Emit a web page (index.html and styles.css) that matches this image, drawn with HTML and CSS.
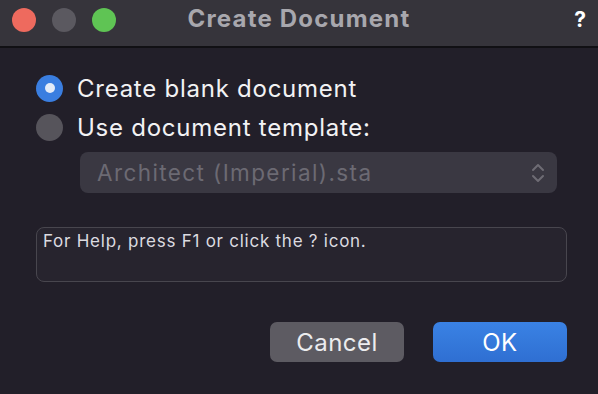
FILE: index.html
```html
<!DOCTYPE html>
<html>
<head>
<meta charset="utf-8">
<link rel="stylesheet" href="styles.css">
</head>
<body>
<div class="window">
  <div class="titlebar">
    <div class="lights">
      <span class="light red"></span>
      <span class="light gray"></span>
      <span class="light green"></span>
    </div>
    <div class="title">Create Document</div>
    <div class="help">?</div>
  </div>
  <div class="content">
    <div class="radio-row">
      <span class="radio on"><span class="dot"></span></span>
      <span class="label">Create blank document</span>
    </div>
    <div class="radio-row second">
      <span class="radio off"></span>
      <span class="label">Use document template:</span>
    </div>
    <div class="select">
      <span class="select-text">Architect (Imperial).sta</span>
      <svg class="chev" width="14" height="22" viewBox="0 0 14 22">
        <path d="M2 8 L7 3 L12 8" fill="none" stroke="#6e6c74" stroke-width="2" stroke-linecap="round" stroke-linejoin="round"/>
        <path d="M2 14 L7 19 L12 14" fill="none" stroke="#6e6c74" stroke-width="2" stroke-linecap="round" stroke-linejoin="round"/>
      </svg>
    </div>
    <div class="info">For Help, press F1 or click the ? icon.</div>
    <div class="buttons">
      <div class="btn cancel">Cancel</div>
      <div class="btn ok">OK</div>
    </div>
  </div>
</div>
</body>
</html>
```
FILE: styles.css
```css
html, body {
  margin: 0;
  padding: 0;
  background: #221f29;
}
.window {
  width: 598px;
  height: 394px;
  background: #221f29;
  font-family: Inter, "Liberation Sans", sans-serif;
  overflow: hidden;
}
.titlebar {
  height: 46px;
  background: #36343b;
  border-bottom: 2px solid #111014;
  display: flex;
  align-items: flex-start;
  position: relative;
  box-sizing: border-box;
  height: 48px;
}
.lights {
  display: flex;
  gap: 16px;
  padding: 8px 0 0 12px;
}
.light {
  width: 24px;
  height: 24px;
  border-radius: 50%;
  display: block;
}
.red { background: #ee6a5e; }
.gray { background: #5b5960; }
.green { background: #5fc454; }
.title {
  position: absolute;
  left: 0;
  right: 0;
  top: 4px;
  text-align: center;
  color: #a8a7ad;
  font-weight: 700;
  font-size: 24px;
  line-height: 30px;
  letter-spacing: 1.2px;
}
.help {
  margin-left: auto;
  margin-right: 12px;
  margin-top: 5px;
  color: #ffffff;
  font-weight: 700;
  font-size: 21px;
  line-height: 30px;
  position: relative;
}
.content {
  padding: 26px 31px 0 36px;
}
.radio-row {
  display: flex;
  align-items: center;
  height: 28px;
}
.radio-row.second {
  margin-top: 11px;
}
.radio {
  width: 27px;
  height: 27px;
  border-radius: 50%;
  display: flex;
  align-items: center;
  justify-content: center;
  flex: none;
}
.radio.on {
  background: #3a7ee0;
}
.radio.on .dot {
  width: 10px;
  height: 10px;
  border-radius: 50%;
  background: #e4ecf8;
}
.radio.off {
  background: #56545b;
}
.label {
  color: #f2f2f4;
  font-size: 24px;
  letter-spacing: 0.75px;
  margin-left: 14px;
}
.select {
  margin: 11px 10px 0 44px;
  height: 41px;
  background: #3a3842;
  border-radius: 8px;
  display: flex;
  align-items: center;
  padding: 0 12px 0 17px;
}
.select-text {
  color: #6c6a73;
  font-size: 22.5px;
  letter-spacing: 1.4px;
  flex: 1;
}
.chev { display: block; }
.info {
  margin-top: 34px;
  border: 1px solid #48464e;
  border-radius: 8px;
  background: #27242e;
  color: #dcdbe0;
  font-size: 17px;
  letter-spacing: 0.75px;
  padding: 3px 6px;
  box-sizing: border-box;
  height: 55px;
}
.buttons {
  display: flex;
  justify-content: flex-end;
  gap: 29px;
  margin-top: 40px;
}
.btn {
  width: 134px;
  height: 40px;
  border-radius: 7px;
  display: flex;
  align-items: center;
  justify-content: center;
  font-size: 24px;
  letter-spacing: 0.5px;
  color: #ececee;
}
.cancel {
  background: #5d5b62;
}
.ok {
  background: linear-gradient(#3a82e4, #2f6fd2);
  color: #ffffff;
}
```
